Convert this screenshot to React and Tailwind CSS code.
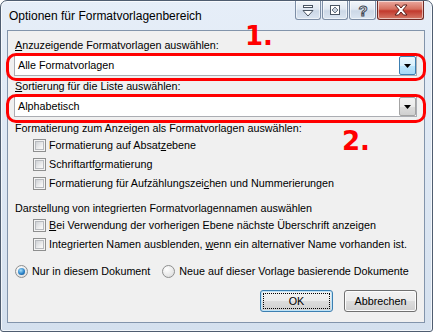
import React from "react";

const FONT = "font-['Liberation_Sans',Arial,sans-serif]";

function CaptionButton({ close, children, className = "" }) {
  return (
    <div
      className={
        "h-[19px] border border-t-0 rounded-b-[3px] flex items-center justify-center shadow-[inset_0_0_0_1px_rgba(255,255,255,0.55)] " +
        (close
          ? "w-[47px] border-[#6f2a25] bg-[linear-gradient(#eaa99f,#d6705f_45%,#c2392d_55%,#d57a68)] "
          : "w-[26px] border-[#7d8ea6] bg-[linear-gradient(#f2f6fa,#e0e8f2_45%,#ccd8e7_55%,#dbe5f1)] ") +
        className
      }
    >
      {children}
    </div>
  );
}

function Check() {
  return (
    <span className="w-[13px] h-[13px] shrink-0 border border-[#8e8f8f] bg-[#f4f4f4] p-px">
      <span className="block w-full h-full border border-[#b7babe] bg-[linear-gradient(135deg,#cfd2d6,#f3f3f3_75%,#fafafa)]" />
    </span>
  );
}

function Radio({ checked }) {
  return (
    <span className="w-[13px] h-[13px] shrink-0 rounded-full border border-[#8e8f8f] bg-[radial-gradient(circle_at_35%_30%,#ffffff,#e4e4e4_70%,#cfcfcf)] flex items-center justify-center">
      {checked && (
        <span className="block w-[7px] h-[7px] rounded-full bg-[radial-gradient(circle_at_40%_35%,#a8e0fa,#2a82c8_55%,#0e3f73)]" />
      )}
    </span>
  );
}

function ComboBox({ value, hot }) {
  return (
    <div className="ml-[6px] mr-[7px] h-[21px] border border-[#abadb3] bg-white flex">
      <div className="flex-1 pl-[3px] leading-[19px]">{value}</div>
      <div
        className={
          "w-[17px] h-[19px] rounded-[2px] border flex items-center justify-center " +
          (hot
            ? "border-[#3c7fb1] bg-[linear-gradient(#eaf6fd,#d9f0fc_50%,#bee6fd_50%,#a7d9f5)]"
            : "border-[#a3a3a3] bg-[linear-gradient(#f2f2f2,#ebebeb_50%,#dddddd_50%,#cfcfcf)]")
        }
      >
        <svg width="7" height="4" viewBox="0 0 7 4">
          <path d="M0 0H7L3.5 4Z" fill="#000" />
        </svg>
      </div>
    </div>
  );
}

function CheckRow({ children }) {
  return (
    <div className="h-[19px] pl-[25px] flex items-center gap-[3px]">
      <Check />
      <span className="leading-[15px]">{children}</span>
    </div>
  );
}

function DialogButton({ children, focused }) {
  return (
    <div
      className={
        "w-[73px] h-[22px] rounded-[3px] border flex items-center justify-center p-[2px] bg-[linear-gradient(#f2f2f2,#ebebeb_50%,#dddddd_50%,#cfcfcf)] " +
        (focused
          ? "border-[#3c7fb1] shadow-[inset_0_0_0_1px_#bfe4f8]"
          : "border-[#707070] shadow-[inset_0_0_0_1px_#fcfcfc]")
      }
    >
      <div
        className={
          "w-full h-full flex items-center justify-center leading-[15px] " +
          (focused ? "border border-dotted border-black" : "")
        }
      >
        {children}
      </div>
    </div>
  );
}

export default function App() {
  return (
    <div className={"w-[433px] h-[332px] bg-white text-black text-[10.75px] " + FONT}>
      <div className="relative w-full h-full rounded-t-[7px] rounded-b-[3px] border border-[#4f5d70] bg-[linear-gradient(#e6eef8,#d4e0ee)] shadow-[inset_0_0_0_1px_rgba(255,255,255,0.7)] flex flex-col">
        {/* title bar */}
        <div className="h-[29px] flex items-start shrink-0">
          <div className="pl-[8px] pt-[8px] text-[12px] leading-[15px]">
            Optionen für Formatvorlagenbereich
          </div>
          <div className="ml-auto mr-[8px] flex gap-[1px]">
            <CaptionButton>
              <svg width="12" height="13" viewBox="0 0 12 13">
                <rect x="1.5" y="1.5" width="9" height="2" fill="#fff" stroke="#4a5563" />
                <path d="M1 6.5H11L6 12Z" fill="#fff" stroke="#4a5563" strokeLinejoin="round" />
              </svg>
            </CaptionButton>
            <CaptionButton>
              <svg width="12" height="12" viewBox="0 0 12 12">
                <rect x="1.5" y="1.5" width="9" height="9" fill="#fff" stroke="#4a5563" />
                <path d="M6 3L9 6L6 9L3 6Z" fill="#c9d2dd" stroke="#6b7685" />
              </svg>
            </CaptionButton>
            <CaptionButton className="w-[27px]">
              <svg width="12" height="15" viewBox="0 0 12 15">
                <text
                  x="6"
                  y="13"
                  textAnchor="middle"
                  fontSize="15"
                  fontWeight="bold"
                  fontFamily="Liberation Sans, Arial, sans-serif"
                  fill="#fff"
                  stroke="#3f4956"
                  strokeWidth="1"
                >
                  ?
                </text>
              </svg>
            </CaptionButton>
            <CaptionButton close>
              <svg width="14" height="12" viewBox="0 0 14 12">
                <path
                  d="M1 1H4.5L7 4L9.5 1H13L8.8 6L13 11H9.5L7 8L4.5 11H1L5.2 6Z"
                  fill="#fff"
                  stroke="#5b1e1a"
                  strokeLinejoin="round"
                />
              </svg>
            </CaptionButton>
          </div>
        </div>

        {/* client area */}
        <div className="ml-[6px] mr-[7px] mb-[8px] flex-1 border border-[#8294ab] bg-[#f0f0f0] flex flex-col pt-[7px]">
          <div className="pl-[7px] h-[15px] leading-[15px]">
            <u>A</u>nzuzeigende Formatvorlagen auswählen:
          </div>
          <div className="mt-[2px]">
            <ComboBox value="Alle Formatvorlagen" hot />
          </div>
          <div className="mt-[3px] pl-[7px] h-[15px] leading-[15px]">
            <u>S</u>ortierung für die Liste auswählen:
          </div>
          <div className="mt-[2px]">
            <ComboBox value="Alphabetisch" />
          </div>
          <div className="mt-[4px] pl-[7px] h-[15px] leading-[15px]">
            Formatierung zum Anzeigen als Formatvorlagen auswählen:
          </div>
          <CheckRow>
            Formatierung auf Absat<u>z</u>ebene
          </CheckRow>
          <CheckRow>
            Schriftartf<u>o</u>rmatierung
          </CheckRow>
          <CheckRow>
            Formatierung für Aufzählungszei<u>c</u>hen und Nummerierungen
          </CheckRow>
          <div className="mt-[8px] pl-[7px] h-[15px] leading-[15px]">
            Darstellung von integrierten Formatvorlagennamen auswählen
          </div>
          <CheckRow>
            <u>B</u>ei Verwendung der vorherigen Ebene nächste Überschrift anzeigen
          </CheckRow>
          <CheckRow>
            Integrierten Namen ausblenden, <u>w</u>enn ein alternativer Name vorhanden ist.
          </CheckRow>
          <div className="mt-[8px] h-[19px] pl-[7px] flex items-center">
            <Radio checked />
            <span className="ml-[4px] leading-[15px]">Nur in diesem Dokument</span>
            <span className="ml-[12px]">
              <Radio />
            </span>
            <span className="ml-[4px] leading-[15px]">Neue auf dieser Vorlage basierende Dokumente</span>
          </div>
          <div className="mt-[9px] pr-[7px] flex justify-end gap-[11px]">
            <DialogButton focused>OK</DialogButton>
            <DialogButton>Abbrechen</DialogButton>
          </div>
        </div>

        {/* red annotations */}
        <div className="absolute left-[5px] top-[52px] w-[420px] h-[28px] rounded-[10px] border-[3px] border-[#ff0000]" />
        <div className="absolute left-[5px] top-[93px] w-[420px] h-[29px] rounded-[10px] border-[3px] border-[#ff0000]" />
        <div className="absolute left-[244px] top-[22px] text-[26px] leading-[26px] font-bold text-[#ff0000] font-['DejaVu_Sans',sans-serif]">
          1.
        </div>
        <div className="absolute left-[341px] top-[127px] text-[26px] leading-[26px] font-bold text-[#ff0000] font-['DejaVu_Sans',sans-serif]">
          2.
        </div>
      </div>
    </div>
  );
}
